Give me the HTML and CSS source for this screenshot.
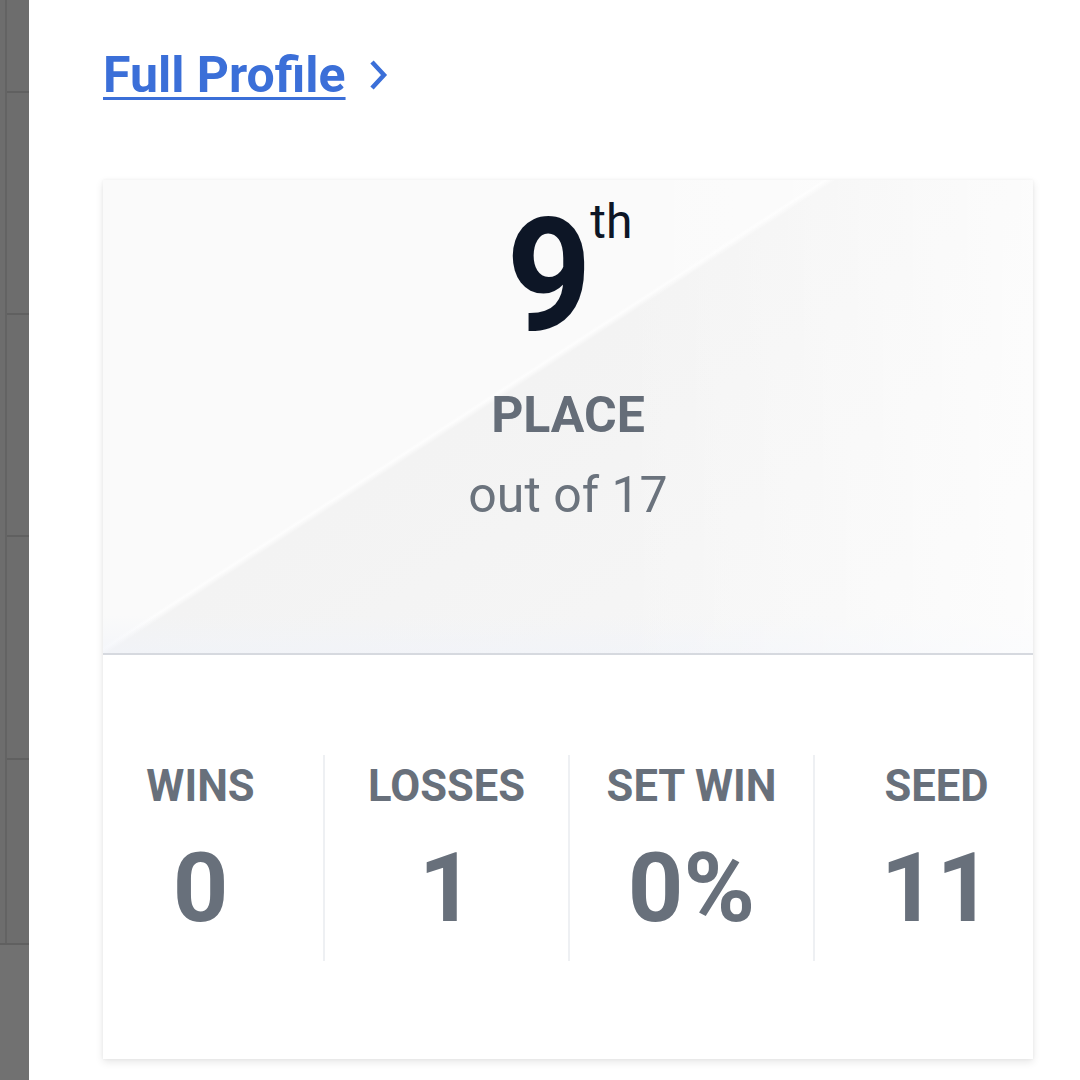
FILE: index.html
```html
<!DOCTYPE html>
<html lang="en">
<head>
<meta charset="utf-8">
<title>Profile result</title>
<link rel="stylesheet" href="styles.css">
</head>
<body>
<div class="page">
  <aside class="sidebar">
    <div class="sidebar-top">
      <div class="sidebar-gap"></div>
      <div class="sidebar-rule"></div>
      <div class="sidebar-rows">
        <div class="sidebar-row r1"></div>
        <div class="sidebar-row r2"></div>
        <div class="sidebar-row r3"></div>
        <div class="sidebar-row r4"></div>
        <div class="sidebar-row r5"></div>
      </div>
    </div>
    <div class="sidebar-bottom"></div>
  </aside>
  <main class="main">
    <div class="profile-link-row">
      <a class="profile-link" href="#">Full Profile</a>
      <svg class="chevron" width="22" height="34" viewBox="0 0 22 34" aria-hidden="true">
        <path d="M4 4 L16 17 L4 30" fill="none" stroke="#3b6fd8" stroke-width="4.5" stroke-linecap="butt" stroke-linejoin="miter"/>
      </svg>
    </div>
    <section class="card">
      <div class="placing">
        <div class="rank">
          <span class="rank-num">9</span>
          <span class="rank-suffix">th</span>
        </div>
        <div class="place-label">PLACE</div>
        <div class="place-total">out of 17</div>
      </div>
      <div class="stats">
        <div class="stat">
          <div class="stat-label">WINS</div>
          <div class="stat-value">0</div>
        </div>
        <div class="stat">
          <div class="stat-label">LOSSES</div>
          <div class="stat-value">1</div>
        </div>
        <div class="stat">
          <div class="stat-label">SET WIN</div>
          <div class="stat-value">0%</div>
        </div>
        <div class="stat">
          <div class="stat-label">SEED</div>
          <div class="stat-value">11</div>
        </div>
      </div>
    </section>
  </main>
</div>
</body>
</html>
```

FILE: styles.css
```css
html, body {
  margin: 0;
  padding: 0;
  background: #ffffff;
  font-family: Roboto, "Liberation Sans", Arial, sans-serif;
}

.page {
  display: flex;
  width: 1080px;
  height: 1080px;
  overflow: hidden;
}

/* Left sidebar strip */
.sidebar {
  width: 29px;
  flex: none;
  display: flex;
  flex-direction: column;
  background: #6d6d6d;
}
.sidebar-top {
  display: flex;
  height: 943px;
  border-bottom: 2px solid #606060;
}
.sidebar-gap {
  width: 5px;
}
.sidebar-rule {
  width: 2px;
  background: #636363;
}
.sidebar-rows {
  flex: 1;
  display: flex;
  flex-direction: column;
}
.sidebar-row {
  border-bottom: 2px solid #606060;
}
.sidebar-row.r1 { height: 91px; }
.sidebar-row.r2 { height: 220px; }
.sidebar-row.r3 { height: 220px; }
.sidebar-row.r4 { height: 221px; }
.sidebar-row.r5 { flex: 1; border-bottom: none; }
.sidebar-bottom {
  flex: 1;
  background: #717171;
}

/* Main column */
.main {
  flex: 1;
  padding: 50px 18px 0 74px;
}

.profile-link-row {
  display: flex;
  align-items: center;
  gap: 22px;
  height: 50px;
}
.profile-link {
  font-size: 50px;
  line-height: 50px;
  font-weight: 700;
  color: #3b6fd8;
  text-decoration: underline;
  text-decoration-thickness: 3px;
  text-underline-offset: 5px;
}
.chevron {
  display: block;
}

/* Card */
.card {
  margin-top: 80px;
  width: 930px;
  background: #ffffff;
  box-shadow: 0 3px 8px rgba(0, 0, 0, 0.10), 0 0 3px rgba(0, 0, 0, 0.05);
}

.placing {
  height: 475px;
  box-sizing: border-box;
  padding-top: 17px;
  display: flex;
  flex-direction: column;
  align-items: center;
  border-bottom: 2px solid #d6d9df;
  background:
    linear-gradient(to right, rgba(255, 255, 255, 0) 55%, rgba(255, 255, 255, 0.7) 100%),
    linear-gradient(to bottom, rgba(255, 255, 255, 0) 92%, rgba(240, 243, 250, 0.6) 100%),
    linear-gradient(147deg, #fafafa 43.3%, #fdfdfd 43.6%, #f3f3f3 44.2%, #f5f5f5 70%, #f7f7f7 100%);
}

.rank {
  display: flex;
  align-items: flex-start;
  justify-content: center;
  color: #0d1626;
}
.rank-num {
  font-size: 158px;
  line-height: 158px;
  font-weight: 700;
  letter-spacing: -4px;
  transform: scaleX(0.94);
}
.rank-suffix {
  font-size: 48px;
  line-height: 48px;
  font-weight: 400;
  margin-top: 1px;
}

.place-label {
  margin-top: 35px;
  font-size: 50px;
  line-height: 50px;
  font-weight: 700;
  color: #656d78;
}
.place-total {
  margin-top: 30px;
  font-size: 50px;
  line-height: 50px;
  font-weight: 400;
  color: #6b737d;
}

/* Stats row */
.stats {
  display: grid;
  grid-template-columns: repeat(4, 1fr);
  margin: 0 -25px;
  padding: 100px 0 98px;
}
.stat {
  display: flex;
  flex-direction: column;
  align-items: center;
  padding: 10px 0 25px;
  color: #68707b;
}
.stat + .stat {
  border-left: 2px solid #eef0f3;
}
.stat-label {
  font-size: 43.5px;
  line-height: 44px;
  font-weight: 700;
}
.stat-value {
  margin-top: 31px;
  font-size: 97px;
  line-height: 96px;
  font-weight: 700;
}
```
